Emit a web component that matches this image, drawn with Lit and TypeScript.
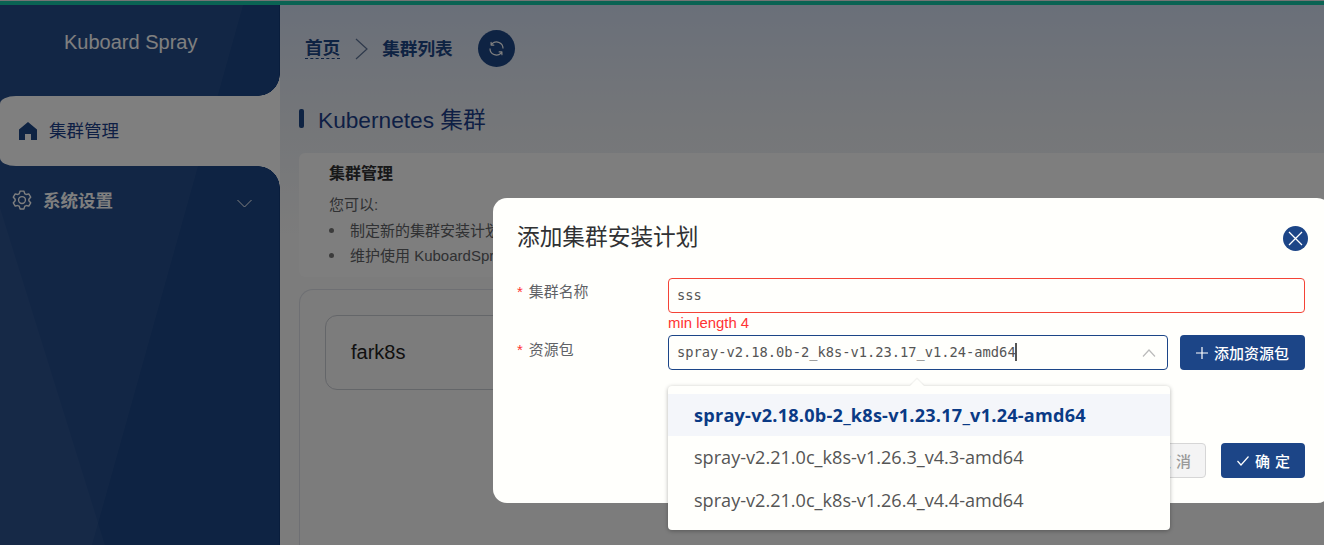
import { LitElement, html, css, svg } from "lit";
import { customElement } from "lit/decorators.js";

const GEAR = "M600.704 64a32 32 0 0 1 30.464 22.208l35.2 109.376c14.784 7.232 28.928 15.36 42.432 24.512l112.384-24.192a32 32 0 0 1 34.432 15.36L944.32 364.8a32 32 0 0 1-4.032 37.504l-77.12 85.12a357.12 357.12 0 0 1 0 49.024l77.12 85.248a32 32 0 0 1 4.032 37.504l-88.704 153.6a32 32 0 0 1-34.432 15.296L708.8 803.904c-13.44 9.088-27.648 17.28-42.368 24.512l-35.264 109.376A32 32 0 0 1 600.704 960H423.296a32 32 0 0 1-30.464-22.208L357.696 828.48a351.616 351.616 0 0 1-42.56-24.64l-112.32 24.256a32 32 0 0 1-34.432-15.36L79.68 659.2a32 32 0 0 1 4.032-37.504l77.12-85.248a357.12 357.12 0 0 1 0-48.896l-77.12-85.248A32 32 0 0 1 79.68 364.8l88.704-153.6a32 32 0 0 1 34.432-15.296l112.32 24.256c13.568-9.152 27.776-17.408 42.56-24.64l35.2-109.312A32 32 0 0 1 423.232 64H600.64zm-23.424 64H446.72l-36.352 113.088-24.512 11.968a294.113 294.113 0 0 0-34.816 20.096l-22.656 15.36-116.224-25.088-65.28 113.152 79.68 88.192-1.92 27.136a293.12 293.12 0 0 0 0 40.192l1.92 27.136-79.808 88.192 65.344 113.152 116.224-25.024 22.656 15.296a294.113 294.113 0 0 0 34.816 20.096l24.512 11.968L446.72 896h130.688l36.48-113.152 24.448-11.904a288.282 288.282 0 0 0 34.752-20.096l22.592-15.296 116.288 25.024 65.28-113.152-79.744-88.192 1.92-27.136a293.12 293.12 0 0 0 0-40.256l-1.92-27.136 79.808-88.128-65.344-113.152-116.288 24.96-22.592-15.232a287.616 287.616 0 0 0-34.752-20.096l-24.448-11.904L577.344 128zM512 320a192 192 0 1 1 0 384 192 192 0 0 1 0-384zm0 64a128 128 0 1 0 0 256 128 128 0 0 0 0-256z";
const REFRESH = "M771.776 794.88A384 384 0 0 1 128 512h64a320 320 0 0 0 555.712 216.448H654.72a32 32 0 1 1 0-64h149.056a32 32 0 0 1 32 32v148.928a32 32 0 1 1-64 0v-50.56zM276.288 295.616h92.992a32 32 0 0 1 0 64H220.16a32 32 0 0 1-32-32V178.56a32 32 0 0 1 64 0v50.56A384 384 0 0 1 896.128 512h-64a320 320 0 0 0-555.776-216.384z";
const HOME = "M512 128 128 447.936V896h255.936V640H640v256h255.936V447.936z";

@customElement("app-root")
export class AppRoot extends LitElement {
  static styles = css`
    :host {
      display: block;
      position: relative;
      width: 1324px;
      height: 545px;
      overflow: hidden;
      font-family: "Liberation Sans", "Noto Sans CJK SC", sans-serif;
      color: #333;
    }
    .page { display: flex; flex-direction: column; height: 100%; }
    .topbar { height: 5px; flex: none; background: #14c7a6; border-top: 1px solid #e8e8e8; box-sizing: border-box; }
    .body { flex: 1; display: flex; min-height: 0; }

    .side {
      position: relative;
      width: 280px;
      flex: none;
      background: #1c4686;
      box-shadow: inset -1px 0 0 #123a78;
      color: #fff;
    }
    .decor { position: absolute; left: 0; top: 0; }
    .brand {
      position: relative;
      height: 91px;
      box-sizing: border-box;
      padding: 24px 0 0 64px;
      font-size: 20px;
      line-height: 26px;
    }
    .active {
      position: relative;
      height: 70px;
      display: flex;
      align-items: center;
      padding-left: 16px;
      gap: 9px;
      background: #fff;
      border-radius: 16px 0 0 16px / 8px 0 0 8px;
      color: #1c3f8a;
      font-size: 17.5px;
    }
    .active svg { width: 24px; height: 24px; fill: #1c4686; }
    .active span { padding-bottom: 3px; }
    .active::before, .active::after {
      content: "";
      position: absolute;
      right: 0;
      width: 22px;
      height: 22px;
    }
    .active::before { top: -22px; background: radial-gradient(circle at 0 0, transparent 21.5px, #fff 22px); }
    .active::after { bottom: -22px; background: radial-gradient(circle at 0 100%, transparent 21.5px, #fff 22px); }
    .sysitem {
      position: relative;
      height: 68px;
      display: flex;
      align-items: center;
      padding: 0 28px 0 11px;
      gap: 10px;
      font-size: 17.5px;
      font-weight: 700;
      color: #fff;
    }
    .sysitem .gear { width: 22px; height: 22px; fill: #fff; flex: none; }
    .sysitem span { padding-bottom: 1px; }
    .sysitem .chev { margin-left: auto; margin-top: 6px; width: 15px; height: 9px; fill: none; stroke: #fff; stroke-width: 1; }

    .main {
      flex: 1;
      min-width: 0;
      padding: 0 0 0 19px;
      background: linear-gradient(180deg, #d4dff2 0, #e8ecf2 110px, #f8f8f8 230px);
    }
    .crumbs {
      height: 87px;
      display: flex;
      align-items: center;
      padding-left: 6px;
      font-weight: 700;
      color: #1c4686;
      box-sizing: border-box;
    }
    .crumbs .home { font-size: 17.6px; border-bottom: 1px dashed #1c4686; line-height: 19px; color: #1c4686; }
    .crumbs .sep { width: 13px; height: 22px; margin: 0 14px 0 15px; fill: none; stroke: #5c7296; stroke-width: 1.2; }
    .crumbs .cur { font-size: 17.6px; line-height: 22px; }
    .refresh {
      width: 37px; height: 37px; border-radius: 50%;
      background: #1c4686;
      margin-left: 25px;
      display: flex; align-items: center; justify-content: center;
    }
    .refresh svg { width: 19px; height: 19px; fill: #fff; }
    .title {
      display: flex;
      align-items: center;
      height: 22px;
      margin-top: 15px;
      gap: 14px;
      font-size: 22.7px;
      color: #1c3f8a;
    }
    .title i { width: 5px; height: 19px; border-radius: 2px; background: #1c4686; }
    .info {
      margin-top: 24px;
      height: 124px;
      box-sizing: border-box;
      background: #fcfcfc;
      border-radius: 6px 0 0 6px;
      padding: 9px 0 0 30px;
      color: #606266;
      font-size: 15px;
    }
    .info h4 { margin: 0; font-size: 16px; line-height: 24px; color: #303133; font-weight: 700; }
    .info p { margin: 7px 0 0; line-height: 24px; }
    .info ul { margin: 1px 0 0; padding: 0; list-style: none; }
    .info li { line-height: 25px; display: flex; align-items: center; }
    .info li::before {
      content: "";
      width: 5px;
      height: 5px;
      border-radius: 50%;
      background: #777;
      margin: 0 16px 0 0;
    }
    .card {
      margin-top: 12px;
      height: 300px;
      box-sizing: border-box;
      border: 1px solid #dcdfe6;
      border-right: 0;
      border-radius: 14px 0 0 0;
      padding: 25px 0 0 25px;
    }
    .cluster {
      width: 400px;
      height: 75px;
      box-sizing: border-box;
      border: 1px solid #c9ccd3;
      border-radius: 12px;
      padding-left: 25px;
      display: flex;
      align-items: center;
      font-size: 20px;
      color: #222;
    }

    .mask { position: absolute; inset: 0; background: rgba(0,0,0,.5); }
    .dialog {
      position: absolute;
      left: 493px;
      top: 198px;
      width: 838px;
      height: 305px;
      box-sizing: border-box;
      background: #fffffc;
      border-radius: 14px;
      padding: 0 26px 25px 24px;
      display: flex;
      flex-direction: column;
    }
    .dhead { height: 80px; flex: none; display: flex; align-items: center; justify-content: space-between; }
    .dhead .t { font-size: 22.7px; color: #303133; margin-bottom: 5px; }
    .close {
      width: 25px; height: 25px; border-radius: 50%;
      background: #1c4587;
      margin-right: -3px;
      display: flex; align-items: center; justify-content: center;
    }
    .close svg { width: 15px; height: 15px; stroke: #fff; stroke-width: 1.3; fill: none; }
    .row { display: flex; }
    .label { width: 151px; flex: none; font-size: 14.9px; line-height: 27px; color: #606266; }
    .label.low { padding-top: 1px; }
    .label b { color: #f33; font-weight: 400; margin-right: 6px; font-size: 15px; }
    .field { flex: 1; min-width: 0; }
    .input {
      height: 35px;
      box-sizing: border-box;
      border: 1px solid #1c4587;
      border-radius: 4px;
      padding: 0 0 1px 8px;
      display: flex;
      align-items: center;
      font-family: "DejaVu Sans Mono", monospace;
      font-size: 13.72px;
      color: #555;
    }
    .input.err { border-color: #f44336; }
    .errmsg { height: 22px; font-size: 14.9px; line-height: 20px; color: #f33; }
    .inline { display: flex; gap: 12px; }
    .inline .input { width: 500px; flex: none; position: relative; }
    .caret { display: inline-block; width: 2px; height: 18px; background: #555; margin-left: -1px; }
    .up { position: absolute; right: 11px; top: 13px; width: 14px; height: 8px; fill: none; stroke: #bbb; stroke-width: 1.2; }
    .btn {
      height: 35px;
      box-sizing: border-box;
      border-radius: 4px;
      background: #1c4587;
      color: #fff;
      font-size: 15px;
      font-weight: 500;
      display: flex;
      align-items: center;
      justify-content: center;
      gap: 6px;
    }
    .btn.add { width: 125px; }
    .btn svg { fill: none; stroke: #fff; stroke-width: 1.2; }
    .foot { margin-top: auto; display: flex; justify-content: flex-end; gap: 15px; }
    .btn.ok, .btn.cancel { width: 84px; letter-spacing: 5px; justify-content: flex-end; padding-right: 10px; }
    .btn.cancel { background: #f4f4f4; border: 1px solid #d6d6d6; color: #999; padding-right: 9px; }

    .pop {
      position: absolute;
      left: 668px;
      top: 386px;
      width: 502px;
      height: 144px;
      box-sizing: border-box;
      background: #fffffc;
      border-radius: 4px;
      padding: 8px 0;
      box-shadow: 0 1px 4px rgba(0,0,0,.3);
      font-family: "Open Sans", "Noto Sans", sans-serif;
      font-size: 18.1px;
      color: #555;
    }
    .pop::before {
      content: "";
      position: absolute;
      left: 244px;
      top: -5px;
      width: 10px;
      height: 10px;
      background: #fffffc;
      transform: rotate(45deg);
      box-shadow: -1px -1px 1px rgba(0,0,0,.06);
    }
    .opt { position: relative; height: 42.6px; line-height: 43px; padding-left: 26px; white-space: nowrap; }
    .opt.sel { height: 42px; background: #f4f6fa; color: #0a3a85; font-weight: 700; letter-spacing: .24px; }
  `;

  render() {
    return html`
      <div class="page">
        <div class="topbar"></div>
        <div class="body">
          <aside class="side">
            <svg class="decor" width="280" height="540" viewBox="0 5 280 540">
              ${svg`<polygon points="0,0 244.5,0 92,545 0,545" fill="rgba(255,255,255,.045)"></polygon>
              <polygon points="0,208 105,545 0,545" fill="rgba(255,255,255,.035)"></polygon>`}
            </svg>
            <div class="brand">Kuboard Spray</div>
            <div class="active">
              <svg viewBox="0 0 1024 1024"><path d=${HOME}></path></svg>
              <span>集群管理</span>
            </div>
            <div class="sysitem">
              <svg class="gear" viewBox="0 0 1024 1024"><path d=${GEAR}></path></svg>
              <span>系统设置</span>
              <svg class="chev" viewBox="0 0 15 9"><path d="M.5 1 7.5 8l7-7"></path></svg>
            </div>
          </aside>
          <main class="main">
            <div class="crumbs">
              <span class="home">首页</span>
              <svg class="sep" viewBox="0 0 13 22"><path d="M1 1l11 10L1 21"></path></svg>
              <span class="cur">集群列表</span>
              <div class="refresh"><svg viewBox="0 0 1024 1024"><path d=${REFRESH}></path></svg></div>
            </div>
            <div class="title"><i></i><span>Kubernetes 集群</span></div>
            <section class="info">
              <h4>集群管理</h4>
              <p>您可以:</p>
              <ul>
                <li>制定新的集群安装计划</li>
                <li>维护使用 KuboardSpray 安装的集群</li>
              </ul>
            </section>
            <section class="card">
              <div class="cluster">fark8s</div>
            </section>
          </main>
        </div>
      </div>
      <div class="mask"></div>
      <div class="dialog">
        <div class="dhead">
          <span class="t">添加集群安装计划</span>
          <span class="close"><svg viewBox="0 0 15 15"><path d="M1 1l13 13M14 1L1 14"></path></svg></span>
        </div>
        <div class="row">
          <div class="label"><b>*</b>集群名称</div>
          <div class="field">
            <div class="input err">sss</div>
            <div class="errmsg">min length 4</div>
          </div>
        </div>
        <div class="row">
          <div class="label low"><b>*</b>资源包</div>
          <div class="field inline">
            <div class="input">spray-v2.18.0b-2_k8s-v1.23.17_v1.24-amd64<span class="caret"></span>
              <svg class="up" viewBox="0 0 14 8"><path d="M1 7.5l6-6.5 6 6.5"></path></svg>
            </div>
            <div class="btn add">
              <svg width="12" height="12" viewBox="0 0 12 12"><path d="M6 0v12M0 6h12"></path></svg>
              <span>添加资源包</span>
            </div>
          </div>
        </div>
        <div class="foot">
          <div class="btn cancel">取消</div>
          <div class="btn ok">
            <svg width="12" height="10" viewBox="0 0 12 10"><path d="M.5 5l3.5 4 7.5-8.5"></path></svg>
            <span>确定</span>
          </div>
        </div>
      </div>
      <div class="pop">
        <div class="opt sel">spray-v2.18.0b-2_k8s-v1.23.17_v1.24-amd64</div>
        <div class="opt">spray-v2.21.0c_k8s-v1.26.3_v4.3-amd64</div>
        <div class="opt">spray-v2.21.0c_k8s-v1.26.4_v4.4-amd64</div>
      </div>
    `;
  }
}
